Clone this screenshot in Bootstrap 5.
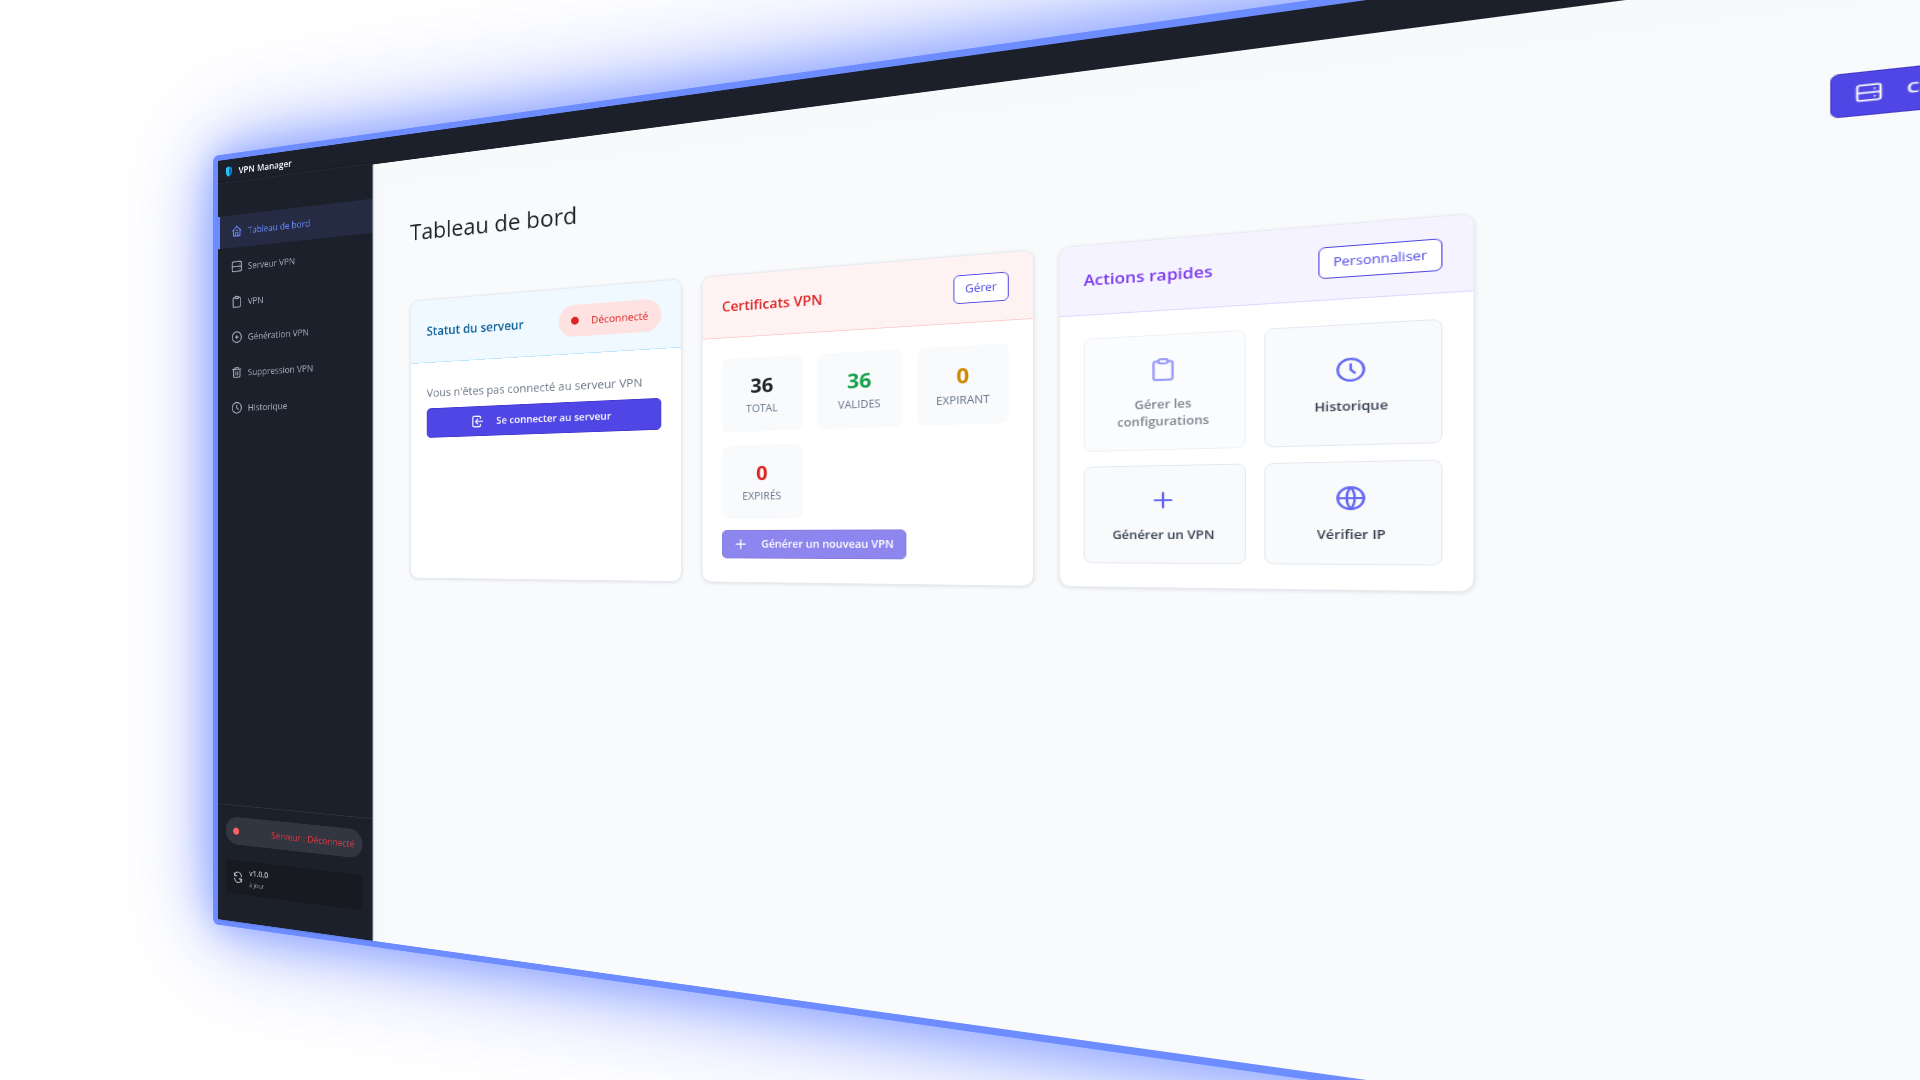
<!DOCTYPE html>
<html lang="fr">
<head>
<meta charset="utf-8">
<meta name="viewport" content="width=device-width, initial-scale=1">
<title>VPN Manager</title>
<link href="https://cdn.jsdelivr.net/npm/bootstrap@5.3.0/dist/css/bootstrap.min.css" rel="stylesheet">
<style>
:root{--ink:#1b202b;--accent:#6c8cff;--indigo:#4f46e5}
body{font-family:"Open Sans","Noto Sans",sans-serif;font-size:14px;line-height:20px;color:#1f2329;background:#fff}
svg{fill:none;stroke:currentColor;stroke-width:2;stroke-linecap:round;stroke-linejoin:round;flex:none}
.i16{width:16px;height:16px}.i18{width:18px;height:18px}.i26{width:26px;height:26px;margin:3px 0}
/* tilted showcase */
.stage{height:100vh;perspective:1626px;perspective-origin:218px 50%}
.win{width:calc(100vw + 16px);height:calc(100vh + 16px);margin-left:210px;border:8px solid var(--accent);border-radius:8px;background:#f8f9fb;
 transform-origin:8px 50%;transform:rotateY(-31deg) scale(.702);box-shadow:0 0 60px #6c8cff99,0 0 130px #5a78ffb3}
.titlebar{height:34px;padding-left:10px;background:var(--ink);color:#fff;font-size:13px;font-weight:600}
.side{width:243px;background:var(--ink);border-top:1px solid #272b35;margin-top:-2px;box-shadow:1px 0 3px #0004}
.side .nav{padding-top:47px;gap:4px}
.side .nav-link{height:46px;padding:0 20px 0 19px;gap:9px;border-left:3px solid transparent;border-radius:0;color:#a9b1be;font-size:13px}
.side .nav-link.active{background:#242b43;border-color:var(--accent);color:var(--accent)}
.sidefoot{padding:16px 15px 39px 13px;border-top:1px solid #303541;gap:22px}
.srv{height:39px;padding:0 12px;border-radius:20px;background:#313640;color:#dc3a44;font-size:13px}
.dot{width:10px;height:10px;border-radius:50%;background:currentColor;flex:none}
.ver{height:48px;padding:0 12px;gap:10px;background:#171a21;border-radius:4px;color:#c6ccd6;font-size:11px;line-height:16px;font-weight:600}
.ver span span{font-size:9px;font-weight:400;color:#9aa2af}
.main{padding:33px 24px 0 25px}
.board{background:#f9fafc;padding:45px 30px 30px;height:100%}
.pagehead{margin-bottom:46px}
.pagehead h1{font-size:30px;line-height:38px;font-weight:500;margin:0 0 26px}
.bt{height:39px;padding:0 12px;border-radius:6px;font-size:13px;font-weight:600;gap:17px;--bs-btn-bg:var(--indigo);--bs-btn-border-color:#4338ca;--bs-btn-disabled-bg:var(--indigo);--bs-btn-disabled-border-color:#4338ca}
.bt.low{height:34px;font-size:12px;gap:15px}
.bt.top{padding:0 15px;min-width:187px;gap:15px}
.bt.low,.tile:disabled{opacity:.65}
.out{height:32px;padding:0 11px;border-radius:6px;font-size:12px;font-weight:500;background:#fff;--bs-btn-color:var(--indigo);--bs-btn-border-color:var(--indigo)}
.cards{display:grid;grid-template-columns:repeat(auto-fill,360px);gap:24px}
.panel{border:1px solid #e5eaf0;border-radius:12px;box-shadow:0 1px 4px #0f172a1f;overflow:hidden;min-height:369px}
.panel header{min-height:75px;padding:0 24px 0 23px;border-bottom:1px solid}
.panel h2{font-size:16px;line-height:24px;font-weight:600;margin:0}
.panel .inner{padding:25px 24px 24px 23px}
.blue header{background:#f0f9ff;border-color:#bae6fd;color:#0c5f97;min-height:83px}
.rose header{background:#fef2f2;border-color:#fecaca;color:#dc2626}
.violet header{background:#f5f3ff;border-color:#ddd6fe;color:#7c3aed}
.pillbad{height:40px;padding:0 16px;gap:16px;border-radius:20px;background:#fee2e2;color:#dc2626;font-size:13px;font-weight:500}
.note{font-size:15px;line-height:28px;color:#6b7787;margin:0 0 7px}
.trio{display:grid;grid-template-columns:repeat(3,1fr);gap:16px;margin-bottom:13px}
.cell{height:88px;background:#f9fafc;border-radius:8px;text-align:center;padding-top:16px;color:#64748b;font-size:12px;line-height:22px}
.cell b{display:block;font-size:23px;line-height:34px}
.duo{display:grid;grid-template-columns:1fr 1fr;gap:16px}
.tile{padding:20px 12px;gap:12px;border:1px solid #e2e8f0;border-radius:8px;background:#f8fafc;color:#374151;font-size:12px;line-height:18px;font-weight:600}
.tile svg{color:#6366f1}
</style>
<script src="https://cdn.jsdelivr.net/npm/bootstrap@5.3.0/dist/js/bootstrap.bundle.min.js"></script>
</head>
<body class="overflow-hidden">
<svg width="0" height="0" class="position-absolute" aria-hidden="true">
<symbol id="home" viewBox="0 0 24 24"><path d="M3 11 12 3l9 8M5 9.500V21h14V9.500M9.500 21v-6h5v6M10 11h4"/></symbol>
<symbol id="server" viewBox="0 0 24 24"><rect x="2" y="3" width="20" height="18" rx="2"/><path d="M2 12h20M17 7.500h.01M17 16.500h.01"/></symbol>
<symbol id="clip" viewBox="0 0 24 24"><path d="M8 4H6a2 2 0 0 0-2 2v14a2 2 0 0 0 2 2h12a2 2 0 0 0 2-2V6a2 2 0 0 0-2-2h-2"/><rect x="8" y="2" width="8" height="4" rx="2"/></symbol>
<symbol id="circplus" viewBox="0 0 24 24"><circle cx="12" cy="12" r="10"/><path d="M12 9v6M9 12h6"/></symbol>
<symbol id="trash" viewBox="0 0 24 24"><path d="M3 6h18M5 6v13a2 2 0 0 0 2 2h10a2 2 0 0 0 2-2V6M8 6V3h8v3M10 10.500v6.500M14 10.500v6.500"/></symbol>
<symbol id="clock" viewBox="0 0 24 24"><circle cx="12" cy="12" r="10"/><path d="M12 7v5l3 3"/></symbol>
<symbol id="plus" viewBox="0 0 24 24"><path d="M12 5v14M5 12h14"/></symbol>
<symbol id="globe" viewBox="0 0 24 24"><circle cx="12" cy="12" r="10"/><path d="M2 12h20M12 2c-4 5-4 15 0 20M12 2c4 5 4 15 0 20"/></symbol>
<symbol id="login" viewBox="0 0 24 24"><path d="M18 7V5a2 2 0 0 0-2-2H6a2 2 0 0 0-2 2v14a2 2 0 0 0 2 2h10a2 2 0 0 0 2-2v-2M22 12H10M13 8l-4 4 4 4"/></symbol>
<symbol id="sync" viewBox="0 0 24 24"><path d="M3 3v6h6M21 21v-6h-6M20 10a8 8 0 0 0-16-2M4 14a8 8 0 0 0 16 2"/></symbol>
</svg>
<div class="stage d-flex align-items-center overflow-hidden">
<div class="win d-flex flex-column flex-shrink-0">
  <div class="titlebar d-flex align-items-center gap-2 flex-shrink-0">
    <svg class="i16" viewBox="0 0 16 16" style="stroke:none"><path fill="#0b8bd8" d="M8 1 13 3v5c0 4-2 6-5 7.500C5 14 3 12 3 8V3z"/><path fill="#29c3f5" d="M8 1v14.500C5 14 3 12 3 8V3z"/><path fill="#0a4f9c" d="m8 5 3 1v2c0 2-1 3-3 4z"/></svg>
    <span>VPN Manager</span>
  </div>
  <div class="d-flex flex-grow-1">
    <aside class="side d-flex flex-column flex-shrink-0 justify-content-between">
      <nav class="nav flex-column">
        <a class="nav-link active d-flex align-items-center" href="#"><svg class="i18"><use href="#home"/></svg>Tableau de bord</a>
        <a class="nav-link d-flex align-items-center" href="#"><svg class="i18"><use href="#server"/></svg>Serveur VPN</a>
        <a class="nav-link d-flex align-items-center" href="#"><svg class="i18"><use href="#clip"/></svg>VPN</a>
        <a class="nav-link d-flex align-items-center" href="#"><svg class="i18"><use href="#circplus"/></svg>Génération VPN</a>
        <a class="nav-link d-flex align-items-center" href="#"><svg class="i18"><use href="#trash"/></svg>Suppression VPN</a>
        <a class="nav-link d-flex align-items-center" href="#"><svg class="i18"><use href="#clock"/></svg>Historique</a>
      </nav>
      <div class="sidefoot d-flex flex-column">
        <div class="srv d-flex align-items-center justify-content-between"><i class="dot" style="color:#ff6266"></i><span>Serveur : Déconnecté</span></div>
        <div class="ver d-flex align-items-center"><svg class="i16"><use href="#sync"/></svg><span>v1.0.0<br><span>à jour</span></span></div>
      </div>
    </aside>
    <main class="main flex-grow-1">
      <div class="board">
        <div class="pagehead d-flex align-items-center justify-content-between">
          <h1>Tableau de bord</h1>
          <button class="btn btn-primary bt top d-flex align-items-center" type="button"><svg class="i18"><use href="#server"/></svg>Connexion serveur</button>
        </div>
        <div class="cards">
          <section class="panel bg-white blue">
            <header class="d-flex align-items-center justify-content-between"><h2>Statut du serveur</h2><span class="pillbad d-flex align-items-center"><i class="dot"></i>Déconnecté</span></header>
            <div class="inner">
              <p class="note">Vous n'êtes pas connecté au serveur VPN</p>
              <button class="btn btn-primary bt w-100 d-flex align-items-center justify-content-center" type="button"><svg class="i18"><use href="#login"/></svg>Se connecter au serveur</button>
            </div>
          </section>
          <section class="panel bg-white rose">
            <header class="d-flex align-items-center justify-content-between"><h2>Certificats VPN</h2><button class="btn btn-outline-primary out" type="button">Gérer</button></header>
            <div class="inner">
              <div class="trio">
                <div class="cell"><b class="text-dark">36</b>TOTAL</div>
                <div class="cell"><b style="color:#16a34a">36</b>VALIDES</div>
                <div class="cell"><b style="color:#ca8a04">0</b>EXPIRANT</div>
                <div class="cell"><b style="color:#dc2626">0</b>EXPIRÉS</div>
              </div>
              <button class="btn btn-primary bt low d-flex align-items-center" type="button" disabled><svg class="i18"><use href="#plus"/></svg>Générer un nouveau VPN</button>
            </div>
          </section>
          <section class="panel bg-white violet">
            <header class="d-flex align-items-center justify-content-between"><h2>Actions rapides</h2><button class="btn btn-outline-primary out" type="button">Personnaliser</button></header>
            <div class="inner duo">
              <button class="tile d-flex flex-column align-items-center justify-content-center" type="button" disabled><svg class="i26"><use href="#clip"/></svg>Gérer les configurations</button>
              <button class="tile d-flex flex-column align-items-center justify-content-center" type="button"><svg class="i26"><use href="#clock"/></svg>Historique</button>
              <button class="tile d-flex flex-column align-items-center justify-content-center" type="button"><svg class="i26"><use href="#plus"/></svg>Générer un VPN</button>
              <button class="tile d-flex flex-column align-items-center justify-content-center" type="button"><svg class="i26"><use href="#globe"/></svg>Vérifier IP</button>
            </div>
          </section>
        </div>
      </div>
    </main>
  </div>
</div>
</div>
</body>
</html>
